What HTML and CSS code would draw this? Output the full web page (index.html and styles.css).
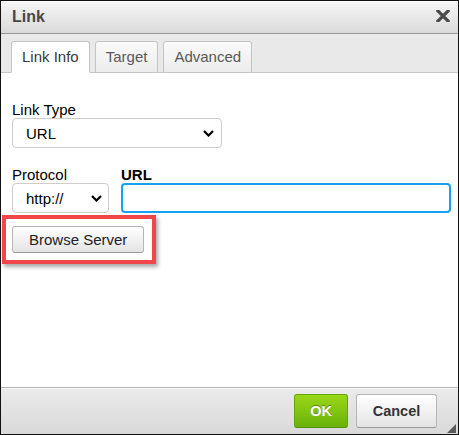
FILE: index.html
```html
<!DOCTYPE html>
<html>
<head>
<meta charset="utf-8">
<link rel="stylesheet" href="styles.css">
</head>
<body>
<div class="dialog">
  <div class="title">
    <span class="title-text">Link</span>
    <svg class="close" width="14" height="12" viewBox="0 0 14 12"><path d="M2 1 L12 11 M12 1 L2 11" stroke="#4a4a4a" stroke-width="3.2" stroke-linecap="square"/></svg>
  </div>
  <div class="tabs">
    <div class="tab active">Link Info</div>
    <div class="tab">Target</div>
    <div class="tab">Advanced</div>
  </div>
  <div class="content">
    <div class="field">
      <div class="label">Link Type</div>
      <div class="select select-type">
        <span>URL</span>
        <svg width="11" height="7" viewBox="0 0 11 7"><polyline points="1,1 5.5,5.5 10,1" fill="none" stroke="#000" stroke-width="2.2"/></svg>
      </div>
    </div>
    <div class="row">
      <div class="field col-protocol">
        <div class="label">Protocol</div>
        <div class="select select-protocol">
          <span>http://</span>
          <svg width="11" height="7" viewBox="0 0 11 7"><polyline points="1,1 5.5,5.5 10,1" fill="none" stroke="#000" stroke-width="2.2"/></svg>
        </div>
      </div>
      <div class="field col-url">
        <div class="label bold">URL</div>
        <div class="input"></div>
      </div>
    </div>
    <div class="btn-row">
      <div class="btn browse">Browse Server</div>
    </div>
  </div>
  <div class="footer">
    <div class="fbtn ok">OK</div>
    <div class="fbtn cancel">Cancel</div>
  </div>
  <div class="highlight"></div>
  <div class="grip"></div>
</div>
</body>
</html>
```

FILE: styles.css
```css
html, body {
  margin: 0;
  padding: 0;
  background: #fff;
}
.dialog {
  position: relative;
  width: 459px;
  height: 435px;
  box-sizing: border-box;
  border: 1px solid #111;
  display: flex;
  flex-direction: column;
  font-family: "Liberation Sans", Arial, sans-serif;
  background: #fff;
}
.title {
  height: 32px;
  border-bottom: 1px solid #999;
  background: linear-gradient(#f6f6f6, #d9dad9);
  box-shadow: inset 0 1px 0 #fff;
  display: flex;
  align-items: center;
  justify-content: space-between;
  padding: 0 8px 0 11px;
}
.title-text {
  font-weight: bold;
  font-size: 16px;
  line-height: 32px;
  color: #474747;
}
.close {
  display: block;
  margin-top: -2px;
}
.tabs {
  height: 38px;
  box-sizing: border-box;
  padding: 7px 0 0 10px;
  background: #e9e9e9;
  border-bottom: 1px solid #c6c6c6;
  display: flex;
  align-items: flex-end;
  gap: 5px;
  box-sizing: content-box;
  height: 31px;
}
.tab {
  height: 32px;
  box-sizing: border-box;
  margin-bottom: -1px;
  padding: 0 10px;
  border: 1px solid #c4c4c4;
  border-radius: 3px 3px 0 0;
  background: linear-gradient(#fafafa, #ececec);
  color: #595959;
  font-size: 15px;
  line-height: 30px;
}
.tab.active {
  background: #fff;
  border-bottom-color: #fff;
  color: #383838;
}
.content {
  flex: 1;
  padding: 28px 0 0 11px;
  background: #fff;
}
.label {
  font-size: 15px;
  line-height: 17px;
  color: #000;
}
.label.bold {
  font-weight: bold;
}
.select {
  height: 30px;
  box-sizing: border-box;
  border: 1px solid #cdcdcd;
  border-radius: 4px;
  background: #fff;
  display: flex;
  align-items: center;
  justify-content: space-between;
  font-size: 15px;
  color: #000;
}
.select-type {
  width: 210px;
  padding: 0 7px 0 13px;
}
.select-protocol {
  width: 97px;
  padding: 0 6px 0 13px;
}
.select svg {
  display: block;
}
.row {
  display: flex;
  gap: 12px;
  margin-top: 18px;
}
.input {
  width: 330px;
  height: 30px;
  box-sizing: border-box;
  border: 2px solid #1aa0f0;
  border-radius: 4px;
  background: #fff;
}
.btn-row {
  margin-top: 13px;
  display: flex;
}
.btn {
  height: 27px;
  box-sizing: border-box;
  padding: 0 16px;
  border: 1px solid #b6b6b6;
  border-bottom-color: #9a9a9a;
  border-radius: 3px;
  background: linear-gradient(#fff, #e4e4e4);
  font-size: 15px;
  line-height: 25px;
  color: #222;
}
.footer {
  height: 46px;
  border-top: 1px solid #b5b5b5;
  background: linear-gradient(#ebebeb, #d8d9d8);
  box-shadow: inset 0 1px 0 #fafafa;
  display: flex;
  justify-content: flex-end;
  align-items: center;
  gap: 8px;
  padding-right: 21px;
}
.fbtn {
  height: 34px;
  box-sizing: border-box;
  border-radius: 3px;
  font-weight: bold;
  font-size: 14.5px;
  line-height: 32px;
  text-align: center;
}
.ok {
  width: 54px;
  border: 1px solid #62a60a;
  border-bottom-color: #4d9200;
  background: linear-gradient(#9ad717, #69b10b);
  color: #fff;
  text-shadow: 0 -1px 0 #55830c;
}
.cancel {
  width: 81px;
  border: 1px solid #b6b6b6;
  border-bottom-color: #999;
  background: linear-gradient(#fff, #e4e4e4);
  color: #333;
}
.highlight {
  position: absolute;
  left: 1px;
  top: 214px;
  width: 154px;
  height: 49px;
  box-sizing: border-box;
  border: 4px solid #f04848;
  box-shadow: 2px 3px 4px rgba(0, 0, 0, 0.35);
}
.grip {
  position: absolute;
  right: 2px;
  bottom: 1px;
  width: 0;
  height: 0;
  border-left: 9px solid transparent;
  border-bottom: 9px solid #5a5a5a;
}
```
